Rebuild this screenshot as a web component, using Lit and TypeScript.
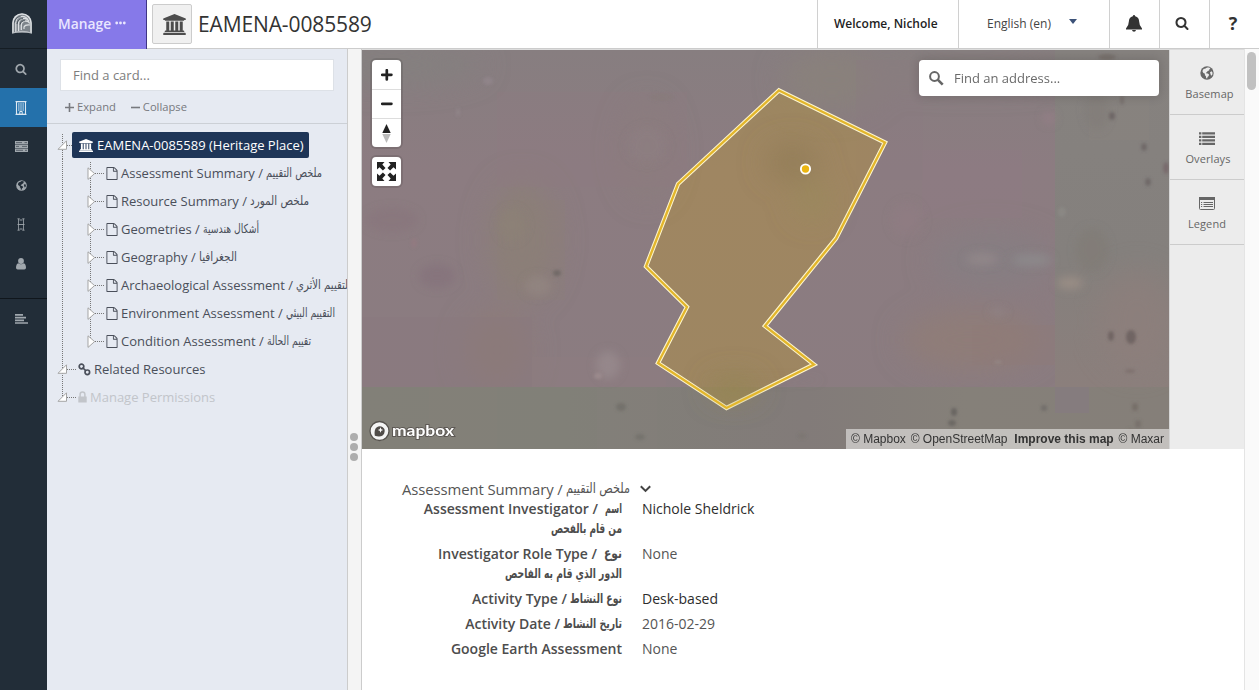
import { LitElement, html, svg, css } from "lit";
import { customElement } from "lit/decorators.js";

const P = {
  search:
    "M1216 832q0-185-131.5-316.5t-316.5-131.5-316.5 131.5-131.5 316.5 131.5 316.5 316.5 131.5 316.5-131.5 131.5-316.5zm512 832q0 52-38 90t-90 38q-54 0-90-38l-343-342q-179 124-399 124-143 0-273.5-55.5t-225-150-150-225-55.5-273.5 55.5-273.5 150-225 225-150 273.5-55.5 273.5 55.5 225 150 150 225 55.5 273.5q0 220-124 399l343 343q37 37 37 90z",
  university:
    "M896 0l960 384v128h-128q0 26-20.5 45t-48.5 19h-1526q-28 0-48.5-19t-20.5-45h-128v-128zm-704 640h256v768h128v-768h256v768h128v-768h256v768h128v-768h256v768h59q28 0 48.5 19t20.5 45v64h-1664v-64q0-26 20.5-45t48.5-19h59v-768zm1595 960q28 0 48.5 19t20.5 45v128h-1920v-128q0-26 20.5-45t48.5-19h1782z",
  file:
    "M1596 380q28 28 48 76t20 88v1152q0 40-28 68t-68 28h-1344q-40 0-68-28t-28-68v-1600q0-40 28-68t68-28h896q40 0 88 20t76 48zm-444-244v376h376q-10-29-22-41l-313-313q-12-12-41-22zm384 1528v-1024h-416q-40 0-68-28t-28-68v-416h-768v1536h1280z",
};

const fa = (d: string, w: number, h: number, box = "0 0 1792 1792") =>
  html`<svg width=${w} height=${h} viewBox=${box}><path d=${d} fill="currentColor"></path></svg>`;

const globe = (s: number, land: string) => html`<svg width=${s} height=${s} viewBox="0 0 14 14">
  <circle cx="7" cy="7" r="6.7" fill="currentColor"></circle>
  <path fill=${land} d="M7.2 1.4l2 .2 1.2 1-1 .6-.3 1.2-1.500.6-.7 1.2-1 .2.6 1 1.3.1 1.2 1-.3 1.4-1.2 1-.3 1.6-1-.2-.3-2-1.100-1.2.2-1.300-1.600-.9-.9-1.300.3-1.600 1.300-1.400.8.3.8-.6zM10 6.200l1.600-1 1 1.500-.3 2-1.200 1-.6-1.600z"></path>
</svg>`;

/* Arabic phrase condensed to a known advance width */
const ar = (t: string, w: number, size: number, bold = false) => html`<svg
  class="ar" width=${w} height="20" viewBox="0 0 ${w} 20"><text x=${w / 2} y="14" text-anchor="middle"
  textLength=${w} lengthAdjust="spacingAndGlyphs" font-size=${size} font-weight=${bold ? 700 : 400}
  font-family="DejaVu Sans, sans-serif" fill="currentColor">${t}</text></svg>`;

const cards: [string, string, number][] = [
  ["Assessment Summary", "ملخص التقييم", 56],
  ["Resource Summary", "ملخص المورد", 59],
  ["Geometries", "أشكال هندسية", 56],
  ["Geography", "الجغرافيا", 38],
  ["Archaeological Assessment", "التقييم الأثري", 55],
  ["Environment Assessment", "التقييم البيئي", 49],
  ["Condition Assessment", "تقييم الحالة", 44],
];

@customElement("app-rail")
class AppRail extends LitElement {
  static styles = css`
    :host { display: flex; flex-direction: column; width: 47px; height: 690px; background: #222d38; color: #a0a7ad; }
    .cell { height: 39px; display: flex; align-items: center; justify-content: center; padding-right: 5px; box-sizing: border-box; }
    .logo { height: 49px; border-bottom: 1px solid #151d24; padding: 0 3px 2px 0; }
    .active { background: #2471ab; color: #dfeaf3; padding-right: 6px; }
    .sep { height: 40px; margin-top: 15px; border-top: 1px solid #10161c; padding-right: 4px; }
    svg { display: block; }
  `;
  render() {
    return html`
      <div class="cell logo">
        <svg width="20" height="21" viewBox="0 0 20 21" fill="none" stroke="#dcdfe2">
          <path d="M0 20V10a10 9.500 0 0 1 20 0v10z" fill="#7d848b" stroke="none"></path>
          <path d="M1 20V10a9 9 0 0 1 18 0v10" stroke-width="1.500"></path>
          <path d="M3.800 19V10.500a6.500 6.500 0 0 1 12-4" stroke-width="1.300"></path>
          <path d="M6.600 18V11.500a5.500 5.500 0 0 1 10.400-3" stroke-width="1.300"></path>
          <path d="M9.300 17v-4.500a4.500 4.500 0 0 1 8.500-2" stroke-width="1.300"></path>
          <path d="M12 16v-2q1-2.500 6-2" stroke-width="1.200"></path>
          <path d="M2.500 9.500a7.500 7.500 0 0 1 6-6M5 11a6 6 0 0 1 6-5.500M8 11.500a5 5 0 0 1 5-3.800" stroke="#38434d" stroke-width=".8"></path>
          <path d="M0 20.300q10-4 20 0" stroke="#b9bec3" stroke-width="1.200"></path>
        </svg>
      </div>
      <div class="cell">${fa(P.search, 12, 12)}</div>
      <div class="cell active">
        <svg width="12" height="14" viewBox="0 0 12 14" fill="none" stroke="currentColor">
          <path d="M1.500 .700h9v12.600h-9z" stroke-width="1.100"></path>
          <path d="M3 3h6M3 5h6M3 7h6M3 9h6" stroke-dasharray="1.200 .4" stroke-width="1.200"></path>
          <path d="M4.800 13v-2.500h2.400V13M.5 .6h11M.5 13.400h11"></path>
        </svg>
      </div>
      <div class="cell">
        <svg width="13" height="11" viewBox="0 0 13 11">
          <path fill="currentColor" d="M0 0h13v3.200H0zM0 3.800h13V7H0zM0 7.600h13V11H0z"></path>
          <path stroke="#39434d" stroke-width=".7" d="M1 1.600h6M9.500 1.600h2.500M1 5.400h3M7 5.400h5M1 9.300h7M10 9.300h2"></path>
        </svg>
      </div>
      <div class="cell">${globe(11, "#222d38")}</div>
      <div class="cell">
        <svg width="8" height="13" viewBox="0 0 8 13" fill="none" stroke="currentColor">
          <path d="M1.500 1v11M6.500 1v11" stroke-width=".8"></path>
          <path d="M.5 .8h2.200M5.300 .8h2.200M2.500 2h3M.5 6.500h7M2.500 11h3M.5 12.200h2.200M5.300 12.200h2.200" stroke-width=".9"></path>
        </svg>
      </div>
      <div class="cell">
        <svg width="10" height="12" viewBox="0 0 10 12" fill="currentColor">
          <circle cx="5" cy="3" r="2.900"></circle>
          <path d="M2.300 5.200Q5 7.300 7.700 5.200 10 6 10 9.800 10 11.600 8.300 11.600H1.700Q0 11.600 0 9.800 0 6 2.300 5.200z"></path>
        </svg>
      </div>
      <div class="cell sep">
        <svg width="13" height="10" viewBox="0 0 13 10" stroke="currentColor" stroke-width="1.700">
          <path d="M0 .9h8M0 3.600h11M0 6.300h9M0 9h13"></path>
        </svg>
      </div>
    `;
  }
}

@customElement("app-header")
class AppHeader extends LitElement {
  static styles = css`
    :host { display: flex; height: 48px; border-bottom: 1px solid #ccc; background: #fff; color: #333; }
    .manage { box-sizing: border-box; width: 100px; height: 49px; margin-bottom: -1px; background: #8679e9; border-right: 1px solid #3f3585;
      color: #e9e6ff; font-size: 13.800px; font-weight: 600; padding-left: 11px; display: flex; align-items: center; gap: 4px; padding-bottom: 3px; }
    .badge { box-sizing: border-box; width: 40px; height: 40px; margin: 4px 6px 0 5px; background: #f0f0f0; border: 1px solid #ccc; border-radius: 2px;
      display: flex; align-items: center; justify-content: center; padding-left: 4px; color: #4d4d4d; }
    .title { font-size: 21px; line-height: 48px; flex: 1; white-space: nowrap; letter-spacing: -0.12px; }
    .box { box-sizing: border-box; border-left: 1px solid #d0d0d0; display: flex; align-items: center; font-size: 12px; line-height: 46px; white-space: nowrap; height: 48px; padding-bottom: 1px; }
    .w { width: 141px; padding-left: 16px; font-weight: 600; color: #222; }
    .l { width: 151px; padding-left: 28px; gap: 18px; color: #444; }
    .i { width: 50px; justify-content: center; padding-bottom: 2px; }
    .q { font-size: 18px; font-weight: 700; padding-right: 3px; }
    .caret { border: 4.500px solid transparent; border-top: 5px solid #3c5278; border-bottom: 0; margin-bottom: 5px; }
    .s { padding-right: 5px; }
    .n { padding-right: 1px; }
  `;
  render() {
    return html`
      <div class="manage"><span>Manage</span>
        <svg width="12" height="4" viewBox="0 0 12 4" fill="currentColor"><circle cx="1.700" cy="2" r="1.400"></circle><circle cx="5.500" cy="2" r="1.400"></circle><circle cx="9.300" cy="2" r="1.400"></circle></svg>
      </div>
      <div class="badge">${fa(P.university, 23, 21, "-64 0 1920 1792")}</div>
      <div class="title">EAMENA-0085589</div>
      <div class="box w">Welcome, Nichole</div>
      <div class="box l"><span>English (en)</span><span class="caret"></span></div>
      <div class="box i n"><svg width="16" height="17" viewBox="0 0 16 17" fill="currentColor"><path d="M8 0q1 0 1.200 1.300 3.800 1 3.900 5 .1 4.500 2.900 7.200v1H0v-1Q2.800 10.800 2.900 6.300 3 2.300 6.800 1.300 7 0 8 0zM6 15h4q-.3 1.800-2 1.800T6 15z"></path></svg></div>
      <div class="box i s">${fa(P.search, 14, 14)}</div>
      <div class="box i q">?</div>
    `;
  }
}

@customElement("card-tree")
class CardTree extends LitElement {
  static styles = css`
    :host { display: flex; flex-direction: column; box-sizing: border-box; width: 301px; height: 641px; background: #e6eaf2; border-right: 1px solid #ccc; overflow: hidden; color: #4a4f5a; }
    .top { box-sizing: border-box; height: 75px; flex: none; border-bottom: 1px solid #ccd0d6; padding: 10px 13px 0; }
    .find { box-sizing: border-box; width: 274px; height: 32px; background: #fff; border: 1px solid #dde1e7; line-height: 30px; padding-left: 12px; font-size: 13px; color: #7d7d7d; }
    .acts { display: flex; gap: 15px; font-size: 11.200px; line-height: 16px; color: #77797e; margin: 8px 0 0 5px; }
    .act { display: flex; align-items: center; gap: 3px; }
    .tree { padding-top: 7px; }
    .row { display: flex; align-items: center; height: 28px; font-size: 13px; white-space: nowrap; }
    .row svg { flex: none; }
    .gut { display: block; overflow: visible; }
    .t { margin-left: 3px; }
    .row .ar { margin-left: 3px; overflow: visible; }
    .sel { display: flex; align-items: center; gap: 4px; height: 26px; width: 237px; box-sizing: border-box; padding-left: 7px; background: #1e3557; color: #fff; border-radius: 2px; font-size: 13px; }
    .off { color: #c2c5ca; }
  `;
  gutter(level: number, first: boolean, last: boolean) {
    if (level === 0)
      return html`<svg class="gut" width=${first ? 25 : 31} height="28" viewBox="0 0 ${first ? 25 : 31} 28">
        <path d="M15.500 ${first ? 3 : 0}V${last ? 14 : 28}M20 14.500H${first ? 25 : 30}" stroke="#777" stroke-dasharray="1 1" fill="none"></path>
        <path d="M11 18.300h8.500v-8.500z" fill="#fff" stroke="#a5a5a5"></path></svg>`;
    return html`<svg class="gut" width="59" height="28" viewBox="0 0 59 28">
      <path d="M15.500 0V28M43.500 ${first ? 3 : 0}V${last ? 14 : 28}M48 14.500h10" stroke="#777" stroke-dasharray="1 1" fill="none"></path>
      <path d="M41 8.800v11.600l6.600-5.800z" fill="#fff" stroke="#a5a5a5"></path></svg>`;
  }
  render() {
    return html`
      <div class="top">
        <div class="find">Find a card...</div>
        <div class="acts">
          <span class="act"><svg width="9" height="9" viewBox="0 0 9 9" stroke="currentColor" stroke-width="1.600"><path d="M0 4.500h9M4.500 0v9"></path></svg>Expand</span>
          <span class="act"><svg width="9" height="9" viewBox="0 0 9 9" stroke="currentColor" stroke-width="1.600"><path d="M0 4.500h9"></path></svg>Collapse</span>
        </div>
      </div>
      <div class="tree">
        <div class="row">${this.gutter(0, true, false)}<div class="sel">${fa(P.university, 14, 13, "-64 0 1920 1792")}<span>EAMENA-0085589 (Heritage Place)</span></div></div>
        ${cards.map(([en, a, w], i) => html`<div class="row">${this.gutter(1, i === 0, i === cards.length - 1)}${fa(P.file, 12, 13, "128 0 1536 1792")}<span class="t">${en} /</span>${ar(a, w, 12.5)}</div>`)}
        <div class="row">${this.gutter(0, false, false)}<svg width="13" height="13" viewBox="0 0 13 13" fill="none" stroke="currentColor" stroke-width="1.700"><circle cx="3.500" cy="3.500" r="2.300"></circle><circle cx="9.300" cy="9.300" r="2.300"></circle><path d="M4.500 4.500l3.700 3.700"></path></svg><span class="t">Related Resources</span></div>
        <div class="row off">${this.gutter(0, false, true)}<svg width="9" height="12" viewBox="0 0 9 12"><path d="M.3 5.500h8.400v6H.3z" fill="currentColor"></path><path d="M2.100 6V3.500a2.400 2.400 0 0 1 4.800 0V6" fill="none" stroke="currentColor" stroke-width="1.500"></path></svg><span class="t">Manage Permissions</span></div>
      </div>
    `;
  }
}

@customElement("map-view")
class MapView extends LitElement {
  static styles = css`
    :host { display: block; position: relative; width: 807px; height: 399px; overflow: hidden; background: #8a7c80; }
    .bg { display: block; }
    .ctl { position: absolute; left: 10px; top: 10px; display: flex; flex-direction: column; gap: 10px; }
    .grp { width: 29px; background: #fff; border-radius: 4px; box-shadow: 0 0 0 2px rgba(0, 0, 0, 0.1); }
    .b { height: 29px; box-sizing: border-box; display: flex; align-items: center; justify-content: center; }
    .b + .b { border-top: 1px solid #ddd; }
    .search { position: absolute; left: 557px; top: 10px; width: 240px; height: 36px; box-sizing: border-box; border-radius: 4px; background: #fff;
      box-shadow: 0 0 10px 2px rgba(0, 0, 0, 0.12); display: flex; align-items: center; gap: 10px; padding-left: 10px; font-size: 13px; color: #6a6a6a; }
    .logo { position: absolute; left: 6px; bottom: 6px; display: block; }
    .attr { position: absolute; right: 0; bottom: 0; height: 20px; width: 323px; box-sizing: border-box; padding: 0 5px; background: rgba(255, 255, 255, 0.5);
      font: 12px/20px "Liberation Sans", sans-serif; color: #333; white-space: nowrap; display: flex; justify-content: space-between; }
    .attr b { margin-left: 2px; }
  `;
  render() {
    const poly = "417,40.500 523,92.500 474,188.500 403,276 452,314.500 364.500,358 296,313 325,257 284,216.500 316,134";
    const spots: [number, number, number, number, string, number][] = [
      [195, 223, 4, 3, "#6c6462", 0.8], [259, 357, 5, 4, "#696762", 0.6], [278, 387, 5, 3, "#6a6862", 0.5],
      [749, 286, 3, 5, "#6d6261", 0.9], [769, 287, 5, 7, "#6d6261", 0.9], [592, 362, 3, 4, "#65625e", 0.9],
      [590, 373, 4, 3, "#65625e", 0.8], [682, 358, 3, 3, "#6b6664", 0.7], [773, 357, 3, 4, "#6f6862", 0.7],
      [750, 66, 3, 4, "#6b6464", 0.9], [782, 97, 3, 4, "#6b6464", 0.8], [786, 132, 3, 4, "#6b6464", 0.8],
      [804, 118, 3, 6, "#756769", 0.8], [760, 50, 2, 5, "#736b69", 0.7], [745, 7, 9, 3, "#706862", 0.6],
      [236, 326, 4, 3, "#a08e90", 0.7], [126, 31, 5, 4, "#95898f", 0.6], [96, 62, 2, 4, "#958c90", 0.5],
      [52, 193, 3, 5, "#957a80", 0.6], [636, 312, 4, 2, "#9c918f", 0.4], [700, 162, 4, 5, "#918f8b", 0.5],
      [440, 386, 4, 3, "#716d68", 0.3], [776, 374, 3, 4, "#6f6862", 0.6], [768, 321, 5, 2, "#766a68", 0.6],
      [768, 384, 4, 6, "#7b706c", 0.4], [300, 47, 12, 4, "#857b79", 0.4],
    ];
    const patches: [number, number, number, number, string, number][] = [
      [246, 315, 12, 14, "#988c8e", 0.7], [176, 236, 13, 10, "#948884", 0.6], [670, 210, 20, 6, "#8f8d8f", 0.7],
      [620, 209, 16, 6, "#958a8b", 0.7], [708, 233, 13, 6, "#9b8f86", 0.9], [687, 68, 6, 6, "#9a8088", 0.6],
      [636, 262, 8, 3, "#93898d", 0.6], [730, 200, 16, 22, "#807c75", 0.6], [30, 170, 26, 12, "#87737a", 0.5],
      [75, 226, 18, 12, "#84727a", 0.6], [400, 330, 60, 3, "#887b79", 0.2], [285, 95, 20, 18, "#8e7f84", 0.4],
      [150, 175, 14, 16, "#8e8375", 0.5], [735, 60, 12, 20, "#7d7975", 0.4], [545, 170, 16, 18, "#927e83", 0.5],
    ];
    const tiles: [number, number, number, number, string, number][] = [
      [135, 42, 190, 95, "#8f7c82", 0.3], [0, 267, 170, 70, "#8a787f", 0.35], [135, 150, 68, 100, "#8b8079", 0.25],
      [170, 307, 134, 30, "#907d82", 0.35], [67, 337, 68, 62, "#85827a", 0.2], [610, 275, 83, 40, "#8f7c77", 0.35],
      [494, 10, 67, 120, "#8b7b82", 0.3], [560, 100, 100, 68, "#8f7b83", 0.35], [693, 337, 34, 26, "#857a80", 0.7],
      [727, 50, 60, 40, "#898480", 0.4], [235, 337, 60, 62, "#85837c", 0.2],
    ];
    const blob = ([x, y, rx, ry, c, o]: [number, number, number, number, string, number]) =>
      svg`<ellipse cx=${x} cy=${y} rx=${rx} ry=${ry} fill=${c} opacity=${o}></ellipse>`;
    return html`
      <svg class="bg" width="807" height="399" viewBox="0 0 807 399">
        <defs>
          <filter id="soft" x="-30%" y="-30%" width="160%" height="160%"><feGaussianBlur stdDeviation="14"></feGaussianBlur></filter>
          <filter id="mid" x="-60%" y="-60%" width="220%" height="220%"><feGaussianBlur stdDeviation="4"></feGaussianBlur></filter>
          <filter id="spot" x="-60%" y="-60%" width="220%" height="220%"><feGaussianBlur stdDeviation="1.400"></feGaussianBlur></filter>
          <linearGradient id="base" x1="0" y1="0" x2="0" y2="1"><stop offset="0" stop-color="#877e80"></stop><stop offset=".3" stop-color="#8c7c81"></stop><stop offset="1" stop-color="#8a7c80"></stop></linearGradient>
          <linearGradient id="east" x1="0" y1="0" x2="0" y2="1"><stop offset="0" stop-color="#86827f"></stop><stop offset=".6" stop-color="#84807d"></stop><stop offset="1" stop-color="#8b7f7c"></stop></linearGradient>
          <linearGradient id="south"><stop offset="0" stop-color="#828078"></stop><stop offset=".25" stop-color="#818078"></stop><stop offset=".55" stop-color="#827b79"></stop><stop offset=".75" stop-color="#858079"></stop><stop offset="1" stop-color="#857f79"></stop></linearGradient>
        </defs>
        <rect width="807" height="399" fill="url(#base)"></rect>
        <g filter="url(#soft)">
          <ellipse cx="160" cy="190" rx="34" ry="60" fill="#8b7f78"></ellipse>
          <ellipse cx="135" cy="300" rx="32" ry="40" fill="#8d7c78"></ellipse>
          <ellipse cx="285" cy="100" rx="25" ry="50" fill="#8b7e79" opacity=".6"></ellipse>
          <ellipse cx="30" cy="15" rx="90" ry="18" fill="#84807f"></ellipse>
          <ellipse cx="470" cy="30" rx="50" ry="30" fill="#89817c"></ellipse>
          <ellipse cx="610" cy="290" rx="70" ry="30" fill="#8f7d78"></ellipse>
          <ellipse cx="630" cy="210" rx="60" ry="28" fill="#867e82"></ellipse>
          <ellipse cx="610" cy="20" rx="110" ry="14" fill="#87807e"></ellipse>
        </g>
        <path d="M693 0h114v337H693z" fill="url(#east)"></path>
        <path d="M0 337h807v62H0z" fill="url(#south)"></path>
        <ellipse cx="775" cy="270" rx="40" ry="50" fill="#8f7f7c" opacity=".6" filter="url(#soft)"></ellipse>
        ${tiles.map(([x, y, w, h, c, o]) => svg`<rect x=${x} y=${y} width=${w} height=${h} fill=${c} opacity=${o}></rect>`)}
        <g filter="url(#mid)">${patches.map(blob)}</g>
        <g filter="url(#spot)">${spots.map(blob)}</g>
        <polygon points=${poly} fill="#b5923c" fill-opacity=".46" stroke="#fdf6cf" stroke-width="4.400"></polygon>
        <g filter="url(#soft)">
          <ellipse cx="430" cy="112" rx="26" ry="18" fill="#8f7a55" opacity=".7"></ellipse>
          <ellipse cx="450" cy="150" rx="18" ry="20" fill="#978a5b" opacity=".6"></ellipse>
          <ellipse cx="372" cy="338" rx="24" ry="10" fill="#8e8551" opacity=".8"></ellipse>
        </g>
        <polygon points=${poly} fill="none" stroke="#e3b62b" stroke-width="2.300"></polygon>
        <circle cx="443.500" cy="119" r="4.600" fill="#ecb612" stroke="#fff" stroke-width="1.900"></circle>
      </svg>
      <div class="ctl">
        <div class="grp">
          <div class="b"><svg width="12" height="12" viewBox="0 0 12 12" stroke="#222" stroke-width="2.700" stroke-linecap="round"><path d="M1.200 5.800h9.200M5.800 1.200v9.200"></path></svg></div>
          <div class="b"><svg width="12" height="12" viewBox="0 0 12 12" stroke="#222" stroke-width="2.700" stroke-linecap="round"><path d="M1.200 5.800h9.200"></path></svg></div>
          <div class="b"><svg width="9" height="19" viewBox="0 0 9 19"><path d="M4.500 0l4.200 9H.3z" fill="#222"></path><path d="M4.500 19L.3 10h8.400z" fill="#bbb"></path></svg></div>
        </div>
        <div class="grp"><div class="b"><svg width="19" height="19" viewBox="0 0 19 19" fill="#222">
          <path d="M0 0h7.500L5.300 2.500l3.200 3.400-2.600 2.600-3.400-3.200L0 7.500z"></path>
          <path transform="matrix(-1 0 0 1 19 0)" d="M0 0h7.500L5.300 2.500l3.200 3.400-2.600 2.600-3.400-3.200L0 7.500z"></path>
          <path transform="matrix(1 0 0 -1 0 19)" d="M0 0h7.500L5.300 2.500l3.200 3.400-2.600 2.600-3.400-3.200L0 7.500z"></path>
          <path transform="matrix(-1 0 0 -1 19 19)" d="M0 0h7.500L5.300 2.500l3.200 3.400-2.600 2.600-3.400-3.200L0 7.500z"></path>
        </svg></div></div>
      </div>
      <div class="search"><svg width="15" height="15" viewBox="0 0 15 15" fill="none" stroke="#666" stroke-width="2"><circle cx="5.500" cy="5.500" r="4.400"></circle><path d="M8.700 8.700l5 5" stroke-width="2.600"></path></svg>Find an address...</div>
      <svg class="logo" width="90" height="24" viewBox="0 0 90 24">
        <circle cx="11.500" cy="12" r="9.500" fill="#f4f4f4" stroke="#57534f" stroke-width="1.300"></circle>
        <path d="M6.800 16.800q-1-6.500 2-8.600t6 0 1.300 6.300-9.300 2.300z" fill="#504c49"></path>
        <path d="M12.500 8.300l.8 1.900 1.900.8-1.900.8-.8 1.900-.8-1.900-1.900-.8 1.900-.8z" fill="#fff"></path>
        <text x="24" y="16.500" font-family="Lato, sans-serif" font-weight="700" font-size="15.500" fill="#fff" stroke="#5d5854" stroke-width="1.800" paint-order="stroke" textLength="62" lengthAdjust="spacingAndGlyphs">mapbox</text>
      </svg>
      <div class="attr"><span>© Mapbox</span><span>© OpenStreetMap</span><b>Improve this map</b><span>© Maxar</span></div>
    `;
  }
}

@customElement("map-tools")
class MapTools extends LitElement {
  static styles = css`
    :host { display: block; box-sizing: border-box; width: 75px; height: 399px; background: #ececec; border-left: 1px solid #d6d6d6; color: #666; }
    .t { height: 65px; box-sizing: border-box; border-bottom: 1px solid #ccc; display: flex; flex-direction: column; align-items: center; padding-top: 15px; font-size: 11px; }
    .g { height: 16px; display: flex; align-items: center; margin-bottom: 5px; }
    .n { padding-left: 5px; line-height: 16px; letter-spacing: 0.1px; }
    .s { padding: 0 0 0 2px; }
    .u { padding: 0; }
  `;
  render() {
    return html`
      <div class="t"><div class="g">${globe(14, "#ececec")}</div><div class="n">Basemap</div></div>
      <div class="t"><div class="g"><svg width="16" height="13" viewBox="0 0 16 13" stroke="currentColor" stroke-width="2.200"><path d="M0 1.300h2.400M3.200 1.300H16M0 4.800h2.400M3.200 4.800H16M0 8.300h2.400M3.200 8.300H16M0 11.800h2.400M3.200 11.800H16"></path></svg></div><div class="n s">Overlays</div></div>
      <div class="t"><div class="g"><svg width="16" height="13" viewBox="0 0 16 13" fill="none" stroke="currentColor"><rect x=".5" y=".5" width="15" height="12" rx="1"></rect><path d="M0 1.500h16" stroke-width="3"></path><path d="M2 5.500h1.200M4.500 5.500h9.500M2 7.500h1.200M4.500 7.500h9.500M2 9.500h1.200M4.500 9.500h9.500"></path></svg></div><div class="n u">Legend</div></div>
    `;
  }
}

@customElement("card-report")
class CardReport extends LitElement {
  static styles = css`
    :host { display: block; padding: 30px 0 0 40px; font-size: 14px; line-height: 20px; color: #555; white-space: nowrap; }
    .h { display: flex; align-items: center; height: 20px; font-size: 14.900px; letter-spacing: -0.1px; }
    .row { display: flex; gap: 20px; margin-bottom: 5px; }
    .k { width: 220px; display: flex; flex-direction: column; align-items: flex-end; font-weight: 600; color: #4d4d4d; }
    .ln { display: flex; align-items: center; height: 20px; }
    .d { color: #2d2d2d; }
    .ar { margin-left: 3px; overflow: visible; }
    .wide .ar { margin-left: 7px; }
    .ln .ar:first-child { margin: 0; }
    .chev { margin-left: 10px; }
  `;
  render() {
    return html`
      <div class="h"><span>Assessment Summary /</span>${ar("ملخص التقييم", 64, 14)}
        <svg class="chev" width="11" height="8" viewBox="0 0 11 8" fill="none" stroke="#444" stroke-width="2"><path d="M.8 1.200l4.700 4.700 4.700-4.700"></path></svg></div>
      <div class="row"><div class="k"><div class="ln wide"><span>Assessment Investigator /</span>${ar("اسم", 17, 13.5, true)}</div><div class="ln">${ar("من قام بالفحص", 71, 13.5, true)}</div></div><div class="v d">Nichole Sheldrick</div></div>
      <div class="row"><div class="k"><div class="ln wide"><span>Investigator Role Type /</span>${ar("نوع", 18, 13.5, true)}</div><div class="ln">${ar("الدور الذي قام به الفاحص", 117, 13.5, true)}</div></div><div class="v">None</div></div>
      <div class="row"><div class="k"><div class="ln"><span>Activity Type /</span>${ar("نوع النشاط", 52, 13.5, true)}</div></div><div class="v d">Desk-based</div></div>
      <div class="row"><div class="k"><div class="ln"><span>Activity Date /</span>${ar("تاريخ النشاط", 59, 13.5, true)}</div></div><div class="v">2016-02-29</div></div>
      <div class="row"><div class="k"><div class="ln"><span>Google Earth Assessment</span></div></div><div class="v">None</div></div>
    `;
  }
}

@customElement("app-root")
class AppRoot extends LitElement {
  static styles = css`
    :host { display: flex; width: 1259px; height: 690px; overflow: hidden; background: #fff; font-family: "Open Sans", "DejaVu Sans", sans-serif; }
    .main { flex: 1; min-width: 0; display: flex; flex-direction: column; }
    .body { display: flex; height: 641px; }
    .split { box-sizing: border-box; width: 14px; background: #f4f4f4; border-right: 1px solid #ccc; display: flex; flex-direction: column; align-items: flex-start; gap: 2px; padding: 384px 0 0 2px; }
    .dot { width: 8px; height: 8px; border-radius: 50%; background: #adadad; }
    .content { width: 882px; }
    .map { display: flex; border-top: 1px solid #dcdcdc; }
    .bar { flex: 1; background: #fafafa; border-left: 1px solid #e4e4e4; padding: 3px 0 0 2px; }
    .thumb { width: 9px; height: 38px; border-radius: 5px; background: #c1c1c1; }
  `;
  render() {
    return html`
      <app-rail></app-rail>
      <div class="main">
        <app-header></app-header>
        <div class="body">
          <card-tree></card-tree>
          <div class="split"><div class="dot"></div><div class="dot"></div><div class="dot"></div></div>
          <div class="content">
            <div class="map"><map-view></map-view><map-tools></map-tools></div>
            <card-report></card-report>
          </div>
          <div class="bar"><div class="thumb"></div></div>
        </div>
      </div>
    `;
  }
}
